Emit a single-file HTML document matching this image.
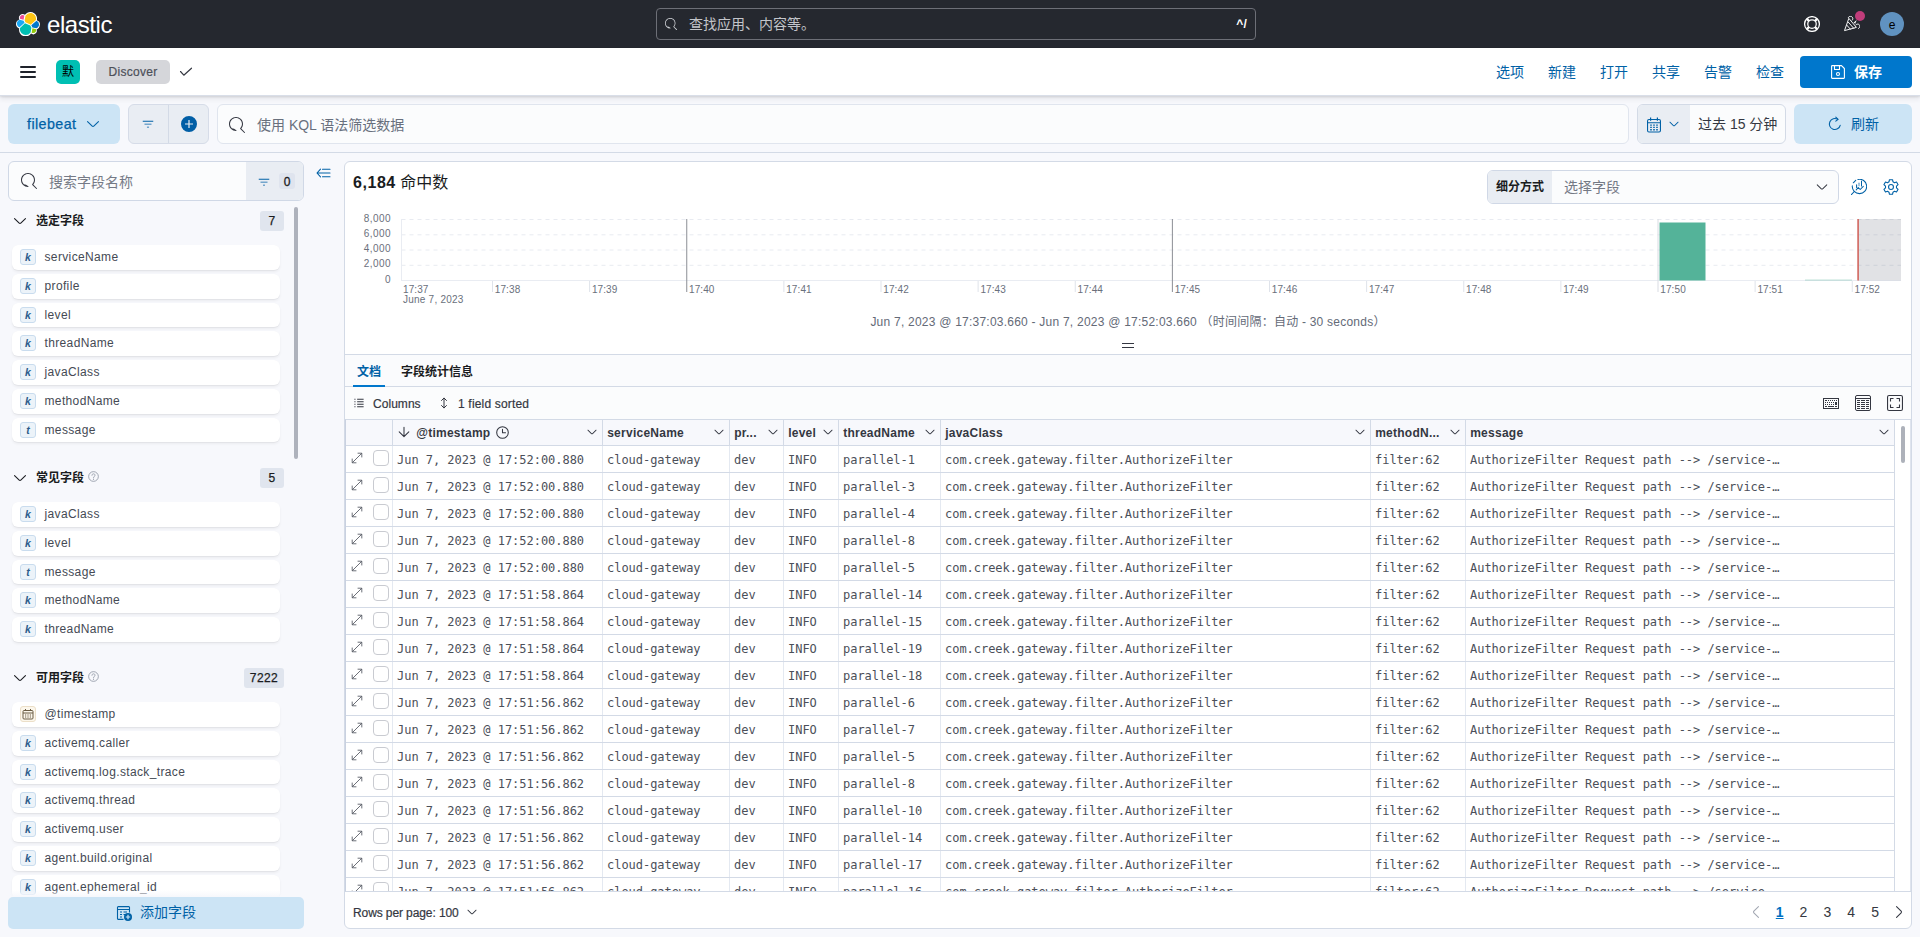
<!DOCTYPE html>
<html lang="zh-CN"><head><meta charset="utf-8"><title>Discover - Elastic</title>
<style>
*{box-sizing:border-box;margin:0;padding:0}
html,body{width:1920px;height:937px;overflow:hidden;background:#f7f8fc}
body{font-family:"Liberation Sans", "Noto Sans CJK SC", sans-serif;font-size:14px;color:#343741;position:relative;-webkit-font-smoothing:antialiased}
.abs{position:absolute}
svg{display:block}
.mono{font-family:"DejaVu Sans Mono", "Liberation Mono", monospace}
/* top dark header */
#h1{left:0;top:0;width:1920px;height:48px;background:#25282f}
#h2{left:0;top:48px;width:1920px;height:48px;background:#fff;box-shadow:0 1px 2px rgba(0,0,0,.10),0 3px 5px rgba(40,40,50,.09);border-bottom:1px solid #d9dee8}
#elastic{left:47px;top:8.5px;font-size:24px;line-height:32px;color:#fff;letter-spacing:-.42px;font-weight:400}
#gsearch{left:656px;top:8px;width:600px;height:32px;border:1px solid #6d6f77;border-radius:4px}
#gsearch .ph{left:32px;top:0;line-height:30px;font-size:14px;color:#c3c5ca}
#gsearch .kb{right:8px;top:0;line-height:30px;font-size:12px;font-weight:700;color:#fff;letter-spacing:.2px}
#avatar{left:1880px;top:12px;width:24px;height:24px;border-radius:12px;background:#6092c0;color:#000;font-size:12px;line-height:27px;text-align:center}
#dot{left:1855px;top:11px;width:10px;height:10px;border-radius:5px;background:#c13d7b}
#space{left:56px;top:60px;width:24px;height:24px;border-radius:5px;background:#00bfb3;color:#000;font-size:12px;line-height:24px;text-align:center}
#crumb{left:96px;top:60px;width:74px;height:24px;border-radius:5px;background:#d5d6da;color:#4c5059;font-size:12px;line-height:24px;text-align:center;letter-spacing:.3px;-webkit-text-stroke:.2px #4c5059}
.tlink{top:60px;height:24px;line-height:24px;font-size:14px;color:#0061a6;width:28px;white-space:nowrap}
#save{left:1800px;top:56px;width:112px;height:32px;border-radius:4px;background:#0077cc;color:#fff}
#save span{left:54px;top:0;line-height:32px;font-size:14px;font-weight:700}
/* query bar */
#dv{left:8px;top:104px;width:112px;height:40px;border-radius:6px;background:#cce4f5;color:#0061a6}
#dv span{left:19px;top:0;line-height:41px;font-size:14.3px;letter-spacing:.42px;-webkit-text-stroke:.25px #0061a6}
#fgrp{left:128px;top:104px;width:81px;height:40px;border-radius:6px;background:#e9edf3;border:1px solid #d6dce8}
#fgrp i{left:39px;top:0;width:1px;height:38px;background:#d3dae6}
#qin{left:217px;top:104px;width:1412px;height:40px;border-radius:6px;background:#fbfcfd;border:1px solid #e0e5ee}
#qin span{left:39px;top:0;line-height:40px;font-size:14px;color:#69707d}
#dp{left:1637px;top:104px;width:149px;height:40px;border-radius:6px;background:#fbfcfd;border:1px solid #d3dae6;overflow:hidden}
#dp .pre{left:0;top:0;width:52px;height:38px;background:#e9edf3}
#dp span{left:60px;top:0;line-height:38px;font-size:14px;color:#343741;white-space:nowrap}
#rf{left:1794px;top:104px;width:118px;height:40px;border-radius:6px;background:#cce4f5;color:#0061a6}
#rf span{left:57px;top:0;line-height:40px;font-size:14px}
#qline{left:0;top:152px;width:1920px;height:1px;background:#d3dae6}

#fs{left:8px;top:161px;width:296px;height:40px;border-radius:6px;background:#fbfcfd;border:1px solid #d0d8e6;overflow:hidden}
#fs .ph{left:40px;top:0;line-height:41px;font-size:14px;color:#757a86}
#fs .app{left:237px;top:0;width:58px;height:38px;background:#e9edf3}
#fs .n0{left:270px;top:11px;width:16px;height:16px;border-radius:3px;background:#dfe4ee;color:#1a1c21;font-size:12px;font-weight:400;-webkit-text-stroke:.3px #1a1c21;line-height:18px;text-align:center}
.sh{left:36px;font-size:12px;font-weight:700;color:#1a1c21;line-height:20px;height:20px;white-space:nowrap}
.sb{height:20px;border-radius:3px;background:#e0e5ee;color:#1a1c21;font-size:12px;font-weight:400;-webkit-text-stroke:.25px #1a1c21;line-height:20px;text-align:center;letter-spacing:.4px}
#flist{left:0;top:202px;width:310px;height:694px;overflow:hidden}
.fi{left:12px;width:268px;height:24.570px;border-radius:6px;background:#fff;box-shadow:0 .8px .8px rgba(0,0,0,.04),0 2px 3px rgba(0,0,0,.05)}
.fi span{left:32.500px;top:0;line-height:24px;font-size:12px;color:#454a54;letter-spacing:.36px;white-space:nowrap}
.tk{left:8px;top:4px;width:16px;height:16px;border-radius:3px;background:#ecf3f9;border:1px solid #c9dcee;color:#2b5c8a;font-size:10.500px;font-weight:700;font-style:italic;line-height:14px;text-align:center;font-family:"Liberation Sans",sans-serif}
.tk.d{background:#fcf7ec;border-color:#ecdfc8;color:#6a5c44}
#addf{left:8px;top:897px;width:296px;height:32px;border-radius:5px;background:#cce4f5;color:#0061a6}
#addf span{left:132px;top:0;line-height:31px;font-size:14px}
#sthumb{left:294px;top:207px;width:4px;height:252px;border-radius:2px;background:#aeb2bc}

#panel{left:344px;top:161px;width:1568px;height:768px;border:1px solid #d3dae6;border-radius:6px;background:#fff;overflow:hidden}
/* coordinates inside #panel are page coords minus (345,162) */
#hits{left:8px;top:10px;line-height:22px;font-size:16px;color:#1a1c21;white-space:nowrap}
#hits b{font-weight:700;letter-spacing:.55px}
#bd{left:1142px;top:8px;width:352px;height:34px;border-radius:6px;border:1px solid #d0d8e6;background:#fbfcfd;overflow:hidden}
#bd .pre{left:0;top:0;width:64px;height:32px;background:#e9edf3;font-size:12px;font-weight:700;color:#1a1c21;line-height:33px;padding-left:8px}
#bd .ph{left:76px;top:0;line-height:33px;font-size:14px;color:#747985}
.yl{left:0;width:46px;text-align:right;font-size:10px;line-height:12px;color:#6a707c;letter-spacing:.45px}
.xl{font-size:10px;line-height:12px;color:#6a707c;letter-spacing:.1px;white-space:nowrap}
#trange{left:0;top:151px;width:1566px;text-align:center;font-size:12px;line-height:18px;color:#646a77;letter-spacing:.23px;white-space:pre}
#tabs{left:0;top:192px;width:1566px;height:33px;background:#fafbfd;border-top:1px solid #d3dae6;border-bottom:1px solid #d3dae6}
#tabs div{top:0;line-height:34px;font-size:12px;font-weight:700;white-space:nowrap}
#tbar{left:0;top:225px;width:1566px;height:32px;background:#fbfcfd}
#tbar span{top:0;line-height:34px;font-size:12px;font-weight:400;-webkit-text-stroke:.2px #343741;color:#343741;letter-spacing:.04px;white-space:nowrap}
#grid{left:0;top:257px;width:1550px;height:473px;border:1px solid #d3dae6;border-left-color:#c9d1e0;overflow:hidden;background:#fff}
.hr{left:0;top:0;width:1548px;height:26px;background:#f7f8fc;border-bottom:1px solid #d3dae6}
.hc{top:0;height:25px;border-right:1px solid #d3dae6;line-height:26px;font-size:12px;font-weight:700;color:#343741;letter-spacing:.25px;white-space:nowrap;padding-left:4.200px}
.hc svg{position:absolute;right:4px;top:6px}
.row{left:0;width:1548px;height:27px;border-bottom:1px solid #d3dae6}
.c{top:0;height:26px;border-right:1px solid #e4e9f1;line-height:29.500px;font-size:12px;color:#4b4f59;white-space:pre;padding-left:4px;letter-spacing:-.03px;overflow:hidden}
.cb{left:27px;top:4px;width:16px;height:16px;border:1px solid #c9cbd1;border-radius:4px;background:#fff}
#foot span{line-height:20px;font-size:12px;font-weight:400;-webkit-text-stroke:.2px #343741;color:#343741;letter-spacing:-.1px;white-space:nowrap}
.pg{top:740px;width:24px;text-align:center;line-height:20px;font-size:14px;font-weight:500;color:#343741}
#gthumb{left:1556px;top:264px;width:4px;height:37px;border-radius:2px;background:#adb1ba}
</style></head>
<body>
<div id="h1" class="abs">
<svg width="24" height="24" viewBox="0 0 32 32" style="position:absolute;left:16px;top:12px"><g fill="none" fill-rule="evenodd"><path fill="#FFF" d="M32 16.77a6.334 6.334 0 0 0-1.14-3.63 6.269 6.269 0 0 0-3.02-2.3 9.098 9.098 0 0 0-.34-5.06 8.997 8.997 0 0 0-3.25-4.14A8.872 8.872 0 0 0 19.17 0a8.823 8.823 0 0 0-4.06.97 8.93 8.93 0 0 0-3.17 2.72 4.798 4.798 0 0 0-2.9-1 4.726 4.726 0 0 0-3.41 1.4A4.8 4.8 0 0 0 4.5 9.98a6.366 6.366 0 0 0-3.35 2.31A6.397 6.397 0 0 0 0 15.97a6.334 6.334 0 0 0 1.15 3.65 6.282 6.282 0 0 0 3.05 2.3 9.068 9.068 0 0 0-.17 1.74 8.886 8.886 0 0 0 1.7 5.26 8.759 8.759 0 0 0 4.45 3.24 8.711 8.711 0 0 0 5.49-.03 8.775 8.775 0 0 0 4.4-3.3 4.77 4.77 0 0 0 2.89 1.01 4.726 4.726 0 0 0 3.41-1.4 4.798 4.798 0 0 0 1.13-5.1 6.366 6.366 0 0 0 3.05-2.31 6.397 6.397 0 0 0 1.15-3.66"/><path fill="#FEC514" d="M12.58 13.787l7.002 3.211 7.066-6.213a7.849 7.849 0 0 0 .152-1.557c0-4.287-3.464-7.762-7.738-7.762a7.727 7.727 0 0 0-6.39 3.391l-1.176 6.128 1.084 2.802z"/><path fill="#00BFB3" d="M5.33 21.228a7.957 7.957 0 0 0-.151 1.584c0 4.297 3.484 7.781 7.783 7.781a7.767 7.767 0 0 0 6.422-3.4l1.166-6.08-1.556-2.976-7.03-3.204-6.634 6.295z"/><path fill="#F04E98" d="M5.288 9.067l4.8 1.137L11.14 4.73a3.785 3.785 0 0 0-2.29-.775 3.797 3.797 0 0 0-3.562 5.113"/><path fill="#1BA9F5" d="M4.872 10.214c-2.144.71-3.644 2.775-3.644 5.064 0 2.229 1.374 4.218 3.438 5.005l6.734-6.101-1.237-2.649-5.291-1.319z"/><path fill="#93C90E" d="M20.873 27.193c.659.509 1.466.787 2.291.787a3.794 3.794 0 0 0 3.551-5.113l-4.797-1.125-1.045 5.45z"/><path fill="#07C" d="M21.848 20.563l5.28 1.238c2.146-.71 3.646-2.776 3.646-5.066a5.376 5.376 0 0 0-3.446-5.003l-6.907 6.07 1.427 2.76z"/></g></svg>
<div id="elastic" class="abs">elastic</div>
<div id="gsearch" class="abs"><svg width="12" height="12" viewBox="0 0 16 16" fill="currentColor" style="position:absolute;left:8px;top:9px;color:#d0d2d7"><path d="m11.271 11.978 3.872 3.873a.502.502 0 0 0 .708 0 .502.502 0 0 0 0-.708l-3.565-3.564c2.38-2.747 2.267-6.923-.342-9.532-2.73-2.73-7.17-2.73-9.898 0-2.728 2.729-2.728 7.17 0 9.9a6.955 6.955 0 0 0 4.949 2.05.5.5 0 0 0 0-1 5.96 5.96 0 0 0-4.242-1.757 6.01 6.01 0 0 1 0-8.486c2.337-2.34 6.143-2.34 8.484 0a6.01 6.01 0 0 1 0 8.486.5.5 0 0 0 .034.738Z"/></svg><div class="ph abs">查找应用、内容等。</div><div class="kb abs">^/</div></div>
<svg width="16" height="16" viewBox="0 0 16 16" fill="currentColor" style="position:absolute;left:1804px;top:16px;color:#fff"><g fill="none" stroke="currentColor"><circle cx="8" cy="8" r="7.400" stroke-width="1.250"/><circle cx="8" cy="8" r="4.250" stroke-width="1.250"/><path d="M2.900 2.900l2.100 2.100M13.100 2.900 11 5M2.900 13.100 5 11M13.100 13.100 11 11" stroke-width="2.300"/></g></svg>
<svg width="16" height="16" viewBox="0 0 16 16" fill="currentColor" style="position:absolute;left:1844px;top:16px;color:#fff"><g fill="none" stroke="currentColor" stroke-width=".95" stroke-linejoin="round" stroke-linecap="round"><path d="M4.700 2.700.5 14.600 12 11.500z"/><path d="M4.300 6.200l5.500 6.200M2.900 9.300l3.600 4"/><path d="M4.300 1.500C4.800.3 6.500-.1 7.700.7c1.300.8 1.500 2.300.6 3.400"/><path d="M12 8.700c1-.8 2.500-.8 3.300.1.900 1 .6 2.700-.7 3.700"/></g><path d="M12.700 4 9.400 6.700l1.200.3.400 1.200z"/></svg>
<div id="dot" class="abs"></div><div id="avatar" class="abs">e</div>
</div>
<div id="h2" class="abs"></div>
<div class="abs" style="left:20px;top:66px;width:16px;height:2px;background:#1f232b;border-radius:1px"></div>
<div class="abs" style="left:20px;top:71px;width:16px;height:2px;background:#1f232b;border-radius:1px"></div>
<div class="abs" style="left:20px;top:76px;width:16px;height:2px;background:#1f232b;border-radius:1px"></div>
<div id="space" class="abs">默</div>
<div id="crumb" class="abs">Discover</div>
<svg class="abs" style="left:179px;top:66px" width="14" height="12" viewBox="0 0 14 12" fill="none" stroke="#343741" stroke-width="1.15" stroke-linecap="round" stroke-linejoin="round"><path d="M1.500 5.500 4.800 9.200 12.500 2.200"/></svg>
<div class="tlink abs" style="left:1496px">选项</div>
<div class="tlink abs" style="left:1548px">新建</div>
<div class="tlink abs" style="left:1600px">打开</div>
<div class="tlink abs" style="left:1652px">共享</div>
<div class="tlink abs" style="left:1704px">告警</div>
<div class="tlink abs" style="left:1756px">检查</div>
<div id="save" class="abs"><svg width="16" height="16" viewBox="0 0 16 16" fill="currentColor" style="position:absolute;left:30px;top:8px"><g fill="none" stroke="currentColor" stroke-width="1.1" stroke-linejoin="round"><path d="M1.6 2.200a.6.6 0 0 1 .6-.6h9.300l2.900 2.900v9.300a.6.6 0 0 1-.6.600H2.200a.6.6 0 0 1-.6-.6z"/><path d="M4.500 1.600v3.900h5V1.600"/><circle cx="8" cy="10" r="1.500"/></g></svg><span class="abs">保存</span></div>
<div id="dv" class="abs"><span class="abs">filebeat</span><svg width="16" height="16" viewBox="0 0 16 16" fill="currentColor" style="position:absolute;left:77px;top:12px"><path d="M13.069 5.157 8.384 9.768a.546.546 0 0 1-.768 0L2.93 5.158a.552.552 0 0 0-.771 0 .53.53 0 0 0 0 .759l4.684 4.61c.641.631 1.672.63 2.312 0l4.684-4.61a.53.53 0 0 0 0-.76.552.552 0 0 0-.771 0Z"/></svg></div>
<div id="fgrp" class="abs"><i class="abs"></i><svg width="14" height="14" viewBox="0 0 16 16" fill="currentColor" style="position:absolute;left:12px;top:12px;color:#0061a6"><path d="M2 4.2h12v1.1H2zM4 7.6h8v1.1H4zM6.8 11h2.4v1.1H6.8z"/></svg><svg width="16" height="16" viewBox="0 0 16 16" fill="currentColor" style="position:absolute;left:51.5px;top:10.7px;color:#005ea6"><path d="M8 16A8 8 0 1 1 8 0a8 8 0 0 1 0 16Zm.6-8.6V4H7.4v3.4H4v1.2h3.4V12h1.2V8.6H12V7.4H8.6Z"/></svg></div>
<div id="qin" class="abs"><svg width="16" height="16" viewBox="0 0 16 16" fill="currentColor" style="position:absolute;left:11px;top:12px;color:#343741"><path d="m11.271 11.978 3.872 3.873a.502.502 0 0 0 .708 0 .502.502 0 0 0 0-.708l-3.565-3.564c2.38-2.747 2.267-6.923-.342-9.532-2.73-2.73-7.17-2.73-9.898 0-2.728 2.729-2.728 7.17 0 9.9a6.955 6.955 0 0 0 4.949 2.05.5.5 0 0 0 0-1 5.96 5.96 0 0 0-4.242-1.757 6.01 6.01 0 0 1 0-8.486c2.337-2.34 6.143-2.34 8.484 0a6.01 6.01 0 0 1 0 8.486.5.5 0 0 0 .034.738Z"/></svg><span class="abs">使用 KQL 语法筛选数据</span></div>
<div id="dp" class="abs"><div class="pre abs"></div><svg width="16" height="16" viewBox="0 0 16 16" fill="currentColor" style="position:absolute;left:8px;top:12px;color:#0061a6"><g fill="none" stroke="currentColor" stroke-width="1.1"><rect x="1.550" y="2.550" width="12.900" height="12.400" rx="1.400"/><path d="M1.600 5.800h12.800"/></g><path d="M4 .5h1.200v3.300H4zM10.800 .5H12v3.300h-1.200zM4.200 7.500h1.600v1.300H4.200zM7.200 7.500h1.600v1.300H7.200zM10.200 7.500h1.600v1.300h-1.600zM4.200 9.800h1.600v1.300H4.200zM7.200 9.800h1.600v1.300H7.200zM10.200 9.800h1.600v1.300h-1.600zM4.200 12.100h1.600v1.300H4.200zM7.200 12.100h1.600v1.300H7.200zM10.200 12.100h1.600v1.300h-1.600z"/></svg><svg width="12" height="12" viewBox="0 0 16 16" fill="currentColor" style="position:absolute;left:30px;top:13px;color:#0061a6"><path d="M13.069 5.157 8.384 9.768a.546.546 0 0 1-.768 0L2.93 5.158a.552.552 0 0 0-.771 0 .53.53 0 0 0 0 .759l4.684 4.61c.641.631 1.672.63 2.312 0l4.684-4.61a.53.53 0 0 0 0-.76.552.552 0 0 0-.771 0Z"/></svg><span class="abs">过去 15 分钟</span></div>
<div id="rf" class="abs"><svg width="16" height="16" viewBox="0 0 16 16" fill="currentColor" style="position:absolute;left:33px;top:12px"><g fill="none" stroke="currentColor" stroke-width="1.1" stroke-linecap="round" stroke-linejoin="round"><path d="M13.200 9.300A5.500 5.500 0 1 1 10.700 3.300"/><path d="M8.800 1.200l2.300 2.100-2.300 1.900" /></g></svg><span class="abs">刷新</span></div>
<div id="qline" class="abs"></div>
<div id="fs" class="abs"><svg width="16" height="16" viewBox="0 0 16 16" fill="currentColor" style="position:absolute;left:12px;top:11px;color:#343741"><path d="m11.271 11.978 3.872 3.873a.502.502 0 0 0 .708 0 .502.502 0 0 0 0-.708l-3.565-3.564c2.38-2.747 2.267-6.923-.342-9.532-2.73-2.73-7.17-2.73-9.898 0-2.728 2.729-2.728 7.17 0 9.9a6.955 6.955 0 0 0 4.949 2.05.5.5 0 0 0 0-1 5.96 5.96 0 0 0-4.242-1.757 6.01 6.01 0 0 1 0-8.486c2.337-2.34 6.143-2.34 8.484 0a6.01 6.01 0 0 1 0 8.486.5.5 0 0 0 .034.738Z"/></svg><div class="ph abs">搜索字段名称</div><div class="app abs"></div><svg width="14" height="14" viewBox="0 0 16 16" fill="currentColor" style="position:absolute;left:248px;top:13px;color:#0061a6"><path d="M2 4.2h12v1.1H2zM4 7.6h8v1.1H4zM6.8 11h2.4v1.1H6.8z"/></svg><div class="n0 abs">0</div></div>
<svg width="15" height="10" viewBox="0 0 15 10" fill="currentColor" style="position:absolute;left:316.300px;top:167.500px;color:#0061a6"><g fill="none" stroke="currentColor" stroke-width="1.1" stroke-linecap="round" stroke-linejoin="round"><path d="M4.500 1.200 1 5l3.500 3.800M1.300 5H14M6.500 1.200H14M6.500 8.800H14"/></g></svg>
<div id="flist" class="abs">
<svg width="16" height="16" viewBox="0 0 16 16" fill="currentColor" style="position:absolute;left:12px;top:11px;color:#1a1c21"><path d="M13.069 5.157 8.384 9.768a.546.546 0 0 1-.768 0L2.93 5.158a.552.552 0 0 0-.771 0 .53.53 0 0 0 0 .759l4.684 4.61c.641.631 1.672.63 2.312 0l4.684-4.61a.53.53 0 0 0 0-.76.552.552 0 0 0-.771 0Z"/></svg><div class="sh abs" style="top:9px">选定字段</div><div class="sb abs" style="left:260px;width:24px;top:9px">7</div><div class="fi abs" style="top:43.20px"><div class="tk abs">k</div><span class="abs">serviceName</span></div><div class="fi abs" style="top:71.95px"><div class="tk abs">k</div><span class="abs">profile</span></div><div class="fi abs" style="top:100.70px"><div class="tk abs">k</div><span class="abs">level</span></div><div class="fi abs" style="top:129.45px"><div class="tk abs">k</div><span class="abs">threadName</span></div><div class="fi abs" style="top:158.20px"><div class="tk abs">k</div><span class="abs">javaClass</span></div><div class="fi abs" style="top:186.95px"><div class="tk abs">k</div><span class="abs">methodName</span></div><div class="fi abs" style="top:215.70px"><div class="tk abs">t</div><span class="abs">message</span></div>
<svg width="16" height="16" viewBox="0 0 16 16" fill="currentColor" style="position:absolute;left:12px;top:268px;color:#1a1c21"><path d="M13.069 5.157 8.384 9.768a.546.546 0 0 1-.768 0L2.93 5.158a.552.552 0 0 0-.771 0 .53.53 0 0 0 0 .759l4.684 4.61c.641.631 1.672.63 2.312 0l4.684-4.61a.53.53 0 0 0 0-.76.552.552 0 0 0-.771 0Z"/></svg><div class="sh abs" style="top:266px">常见字段</div><svg width="11" height="11" viewBox="0 0 12 12" fill="currentColor" style="position:absolute;left:88px;top:269px;color:#8e95a3"><g fill="none" stroke="currentColor" stroke-width=".9"><circle cx="6" cy="6" r="5.300"/><path d="M4.300 4.700c0-1 .8-1.600 1.700-1.600s1.700.6 1.700 1.500c0 1.200-1.700 1.300-1.700 2.600" stroke-linecap="round"/></g><circle cx="6" cy="8.900" r=".6"/></svg><div class="sb abs" style="left:260px;width:24px;top:266px">5</div><div class="fi abs" style="top:300.20px"><div class="tk abs">k</div><span class="abs">javaClass</span></div><div class="fi abs" style="top:328.95px"><div class="tk abs">k</div><span class="abs">level</span></div><div class="fi abs" style="top:357.70px"><div class="tk abs">t</div><span class="abs">message</span></div><div class="fi abs" style="top:386.45px"><div class="tk abs">k</div><span class="abs">methodName</span></div><div class="fi abs" style="top:415.20px"><div class="tk abs">k</div><span class="abs">threadName</span></div>
<svg width="16" height="16" viewBox="0 0 16 16" fill="currentColor" style="position:absolute;left:12px;top:468px;color:#1a1c21"><path d="M13.069 5.157 8.384 9.768a.546.546 0 0 1-.768 0L2.93 5.158a.552.552 0 0 0-.771 0 .53.53 0 0 0 0 .759l4.684 4.61c.641.631 1.672.63 2.312 0l4.684-4.61a.53.53 0 0 0 0-.76.552.552 0 0 0-.771 0Z"/></svg><div class="sh abs" style="top:466px">可用字段</div><svg width="11" height="11" viewBox="0 0 12 12" fill="currentColor" style="position:absolute;left:88px;top:469px;color:#8e95a3"><g fill="none" stroke="currentColor" stroke-width=".9"><circle cx="6" cy="6" r="5.300"/><path d="M4.300 4.700c0-1 .8-1.600 1.700-1.600s1.700.6 1.700 1.500c0 1.200-1.700 1.300-1.700 2.600" stroke-linecap="round"/></g><circle cx="6" cy="8.900" r=".6"/></svg><div class="sb abs" style="left:244px;width:40px;top:466px">7222</div><div class="fi abs" style="top:500.20px"><div class="tk d abs"><svg width="12" height="12" viewBox="0 0 12 12" fill="currentColor" style="position:absolute;left:1px;top:1px"><g fill="none" stroke="currentColor" stroke-width="1"><rect x="1" y="2.500" width="10" height="8.500" rx="1"/><path d="M1 5h10M3.500 1v2M8.500 1v2"/></g><path d="M3 6.500h1.200v1H3zM5.400 6.500h1.200v1H5.400zM7.800 6.500H9v1H7.800zM3 8.500h1.200v1H3zM5.400 8.500h1.200v1H5.400zM7.800 8.500H9v1H7.800z"/></svg></div><span class="abs">@timestamp</span></div><div class="fi abs" style="top:528.95px"><div class="tk abs">k</div><span class="abs">activemq.caller</span></div><div class="fi abs" style="top:557.70px"><div class="tk abs">k</div><span class="abs">activemq.log.stack_trace</span></div><div class="fi abs" style="top:586.45px"><div class="tk abs">k</div><span class="abs">activemq.thread</span></div><div class="fi abs" style="top:615.20px"><div class="tk abs">k</div><span class="abs">activemq.user</span></div><div class="fi abs" style="top:643.95px"><div class="tk abs">k</div><span class="abs">agent.build.original</span></div><div class="fi abs" style="top:672.70px"><div class="tk abs">k</div><span class="abs">agent.ephemeral_id</span></div>
<div class="abs" style="left:0;top:688px;width:310px;height:6px;background:linear-gradient(rgba(247,248,252,0),rgba(247,248,252,.9))"></div>
</div>
<div id="sthumb" class="abs"></div>
<div id="addf" class="abs"><svg width="16" height="16" viewBox="0 0 16 16" fill="currentColor" style="position:absolute;left:108px;top:8px"><g fill="none" stroke="currentColor" stroke-width="1.1" stroke-linejoin="round"><path d="M7.500 14.400H2.200a.7.700 0 0 1-.7-.7V2.300a.7.700 0 0 1 .7-.7h10.600a.7.700 0 0 1 .7.700v5.200"/><path d="M1.500 4.500h12M4 7h2M7.500 7H11M4 9.500h2M7.500 9.500h1.500M4 12h2"/></g><circle cx="12" cy="12" r="4"/><path d="M12 9.800v4.400M9.800 12h4.400" stroke="#cce4f5" stroke-width="1.200"/></svg><span class="abs">添加字段</span></div>
<div id="panel" class="abs">
<div id="hits" class="abs"><b>6,184</b> 命中数</div>
<div id="bd" class="abs"><div class="pre abs">细分方式</div><div class="ph abs">选择字段</div><svg width="14" height="14" viewBox="0 0 16 16" fill="currentColor" style="position:absolute;left:327px;top:9px;color:#343741"><path d="M13.069 5.157 8.384 9.768a.546.546 0 0 1-.768 0L2.93 5.158a.552.552 0 0 0-.771 0 .53.53 0 0 0 0 .759l4.684 4.61c.641.631 1.672.63 2.312 0l4.684-4.61a.53.53 0 0 0 0-.76.552.552 0 0 0-.771 0Z"/></svg></div>
<svg width="16" height="16" viewBox="0 0 16 16" fill="currentColor" style="position:absolute;left:1506px;top:17px;color:#0061a6"><g fill="none" stroke="currentColor" stroke-width="1.050" stroke-linecap="round" stroke-linejoin="round"><path d="M6.900 .4A7.200 7.200 0 1 1 1.300 6.800"/><path d="M2.300 3.800 4.700 1.400M3.300 12.500.3 15.700"/><path d="M5.600 5.700v2.800M10.500 2v5"/><path d="M8 4.200v2.500" opacity=".55" stroke-width="1.300"/><path d="M5.200 10.900l2-2.400 2 2 3.100-3.100"/></g></svg>
<svg width="16" height="16" viewBox="0 0 16 16" fill="currentColor" style="position:absolute;left:1538px;top:17px;color:#0061a6"><g fill="none" stroke="currentColor" stroke-width="1.100" stroke-linejoin="round"><path d="M6.01 2.82L6.45 0.71L9.55 0.71L9.99 2.82L11.49 3.69L13.54 3.01L15.09 5.70L13.48 7.13L13.48 8.87L15.09 10.30L13.54 12.99L11.49 12.31L9.99 13.18L9.55 15.29L6.45 15.29L6.01 13.18L4.51 12.31L2.46 12.99L0.91 10.30L2.52 8.87L2.52 7.13L0.91 5.70L2.46 3.01L4.51 3.69Z"/><circle cx="8" cy="8" r="2.450"/></g></svg>
<svg class="abs" style="left:0;top:50px" width="1566" height="140" viewBox="0 0 1566 140"><path d="M56.5 7.5H1556" stroke="#e8ebf1" stroke-width="1" stroke-dasharray="4 4"/><path d="M56.5 22.80000000000001H1556" stroke="#e8ebf1" stroke-width="1" stroke-dasharray="4 4"/><path d="M56.5 38.0H1556" stroke="#e8ebf1" stroke-width="1" stroke-dasharray="4 4"/><path d="M56.5 53.30000000000001H1556" stroke="#e8ebf1" stroke-width="1" stroke-dasharray="4 4"/><path d="M56.5 7V69" stroke="#e9ecf2" stroke-width="1"/><path d="M56 68.5H1556" stroke="#e9ecf2" stroke-width="1"/><path d="M147.50 69V80" stroke="#dfe3ea" stroke-width="1"/><path d="M244.62 69V80" stroke="#dfe3ea" stroke-width="1"/><path d="M341.75 7V80" stroke="#8b8e95" stroke-width="1"/><path d="M438.88 69V80" stroke="#dfe3ea" stroke-width="1"/><path d="M536.00 69V80" stroke="#dfe3ea" stroke-width="1"/><path d="M633.12 69V80" stroke="#dfe3ea" stroke-width="1"/><path d="M730.25 69V80" stroke="#dfe3ea" stroke-width="1"/><path d="M827.38 7V80" stroke="#8b8e95" stroke-width="1"/><path d="M924.50 69V80" stroke="#dfe3ea" stroke-width="1"/><path d="M1021.62 69V80" stroke="#dfe3ea" stroke-width="1"/><path d="M1118.75 69V80" stroke="#dfe3ea" stroke-width="1"/><path d="M1215.88 69V80" stroke="#dfe3ea" stroke-width="1"/><path d="M1313.00 7V80" stroke="#d9dce3" stroke-width="1"/><path d="M1410.12 69V80" stroke="#dfe3ea" stroke-width="1"/><path d="M1507.25 69V80" stroke="#dfe3ea" stroke-width="1"/><rect x="1314.5" y="10.5" width="46" height="58.0" fill="#54b399"/><rect x="1460" y="67.60000000000002" width="47" height=".9" fill="#54b399" opacity=".45"/><rect x="1513" y="7" width="43" height="61.5" fill="#69707d" opacity=".2"/><rect x="1512.3" y="7" width="1.600" height="61.5" fill="#d2665f"/></svg>
<div class="yl abs" style="top:50.8px">8,000</div>
<div class="yl abs" style="top:66.0px">6,000</div>
<div class="yl abs" style="top:81.2px">4,000</div>
<div class="yl abs" style="top:96.3px">2,000</div>
<div class="yl abs" style="top:111.5px">0</div>
<div class="xl abs" style="left:58px;top:122px">17:37</div>
<div class="xl abs" style="left:58px;top:132px;letter-spacing:.23px">June 7, 2023</div>
<div class="xl abs" style="left:149.8px;top:122px">17:38</div>
<div class="xl abs" style="left:246.9px;top:122px">17:39</div>
<div class="xl abs" style="left:344.0px;top:122px">17:40</div>
<div class="xl abs" style="left:441.2px;top:122px">17:41</div>
<div class="xl abs" style="left:538.3px;top:122px">17:42</div>
<div class="xl abs" style="left:635.4px;top:122px">17:43</div>
<div class="xl abs" style="left:732.5px;top:122px">17:44</div>
<div class="xl abs" style="left:829.7px;top:122px">17:45</div>
<div class="xl abs" style="left:926.8px;top:122px">17:46</div>
<div class="xl abs" style="left:1023.9px;top:122px">17:47</div>
<div class="xl abs" style="left:1121.0px;top:122px">17:48</div>
<div class="xl abs" style="left:1218.2px;top:122px">17:49</div>
<div class="xl abs" style="left:1315.3px;top:122px">17:50</div>
<div class="xl abs" style="left:1412.4px;top:122px">17:51</div>
<div class="xl abs" style="left:1509.5px;top:122px">17:52</div>
<div id="trange" class="abs">Jun 7, 2023 @ 17:37:03.660 - Jun 7, 2023 @ 17:52:03.660 （时间间隔：自动 - 30 seconds）</div>
<div class="abs" style="left:777px;top:181px;width:12px;height:1px;background:#343741"></div><div class="abs" style="left:777px;top:185px;width:12px;height:1px;background:#343741"></div>
<div id="tabs" class="abs"><div class="abs" style="left:12px;color:#0061a6">文档</div><div class="abs" style="left:56px;color:#1a1c21">字段统计信息</div><i class="abs" style="left:8px;top:29.700px;width:32px;height:2.300px;background:#0077cc"></i></div>
<div id="tbar" class="abs"><svg width="12" height="12" viewBox="0 0 12 13" fill="currentColor" style="position:absolute;left:8px;top:10px;color:#343741"><path d="M1 2h1.200v1.100H1zM4 2h7v1.100H4zM1 4.700h1.200v1.100H1zM4 4.700h7v1.100H4zM1 7.400h1.200v1.100H1zM4 7.400h7v1.100H4zM1 10.100h1.200v1.100H1zM4 10.100h7v1.100H4z"/></svg><span class="abs" style="left:28px">Columns</span><svg width="8" height="12" viewBox="0 0 8 12" fill="currentColor" style="position:absolute;left:95px;top:10px;color:#343741"><g fill="none" stroke="currentColor" stroke-width="1" stroke-linecap="round" stroke-linejoin="round"><path d="M4 1.200v9.600M1.500 3.500 4 1l2.500 2.500M1.500 8.500 4 11l2.500-2.500"/></g></svg><span class="abs" style="left:113px;letter-spacing:.18px">1 field sorted</span><svg width="16" height="16" viewBox="0 0 16 16" fill="currentColor" style="position:absolute;left:1478px;top:8px;color:#343741"><g fill="none" stroke="currentColor" stroke-width="1"><rect x=".5" y="3.500" width="15" height="10"/></g><path d="M2 5h2v1H2zM5 5h1v1H5zM7 5h1v1H7zM9 5h1v1H9zM11 5h1v1h-1zM13 5h1v1h-1zM2 7h1v1H2zM4 7h1v1H4zM6 7h1v1H6zM8 7h1v1H8zM10 7h1v1h-1zM12 7h2v3h-2zM2 9h1v1H2zM4 9h1v1H4zM6 9h1v1H6zM8 9h1v1H8zM10 9h1v1h-1zM2 11h2v1H2zM5 11h6v1H5zM12 11h2v1h-2z"/></svg><svg width="16" height="16" viewBox="0 0 16 16" fill="currentColor" style="position:absolute;left:1510px;top:8px;color:#343741"><g fill="none" stroke="currentColor" stroke-width="1"><rect x=".5" y=".5" width="15" height="15" rx="1.500"/></g><path d="M.5 3h15v1H.5zM2 5h3v1H2zM6 5h4v1H6zM11 5h3v1H11zM2 7h3v1H2zM6 7h4v1H6zM11 7h3v1H11zM2 9h3v1H2zM6 9h4v1H6zM11 9h3v1H11zM2 11h3v1H2zM6 11h4v1H6zM11 11h3v1H11zM2 13h3v1H2zM6 13h4v1H6zM11 13h3v1H11z"/></svg><svg width="16" height="16" viewBox="0 0 16 16" fill="currentColor" style="position:absolute;left:1542px;top:8px;color:#343741"><g fill="none" stroke="currentColor" stroke-width="1.1" stroke-linejoin="round"><rect x=".55" y=".55" width="14.900" height="14.900" rx="1.500"/><path d="M3.500 6.500v-3h3M9.500 3.500h3v3M12.500 9.500v3h-3M6.500 12.500h-3v-3"/></g></svg></div>
<div id="grid" class="abs"><div class="hr abs"><div class="hc abs" style="left:0;width:47px"></div><div class="hc abs" style="left:47px;width:210px"><svg width="12" height="12" viewBox="0 0 12 12" fill="currentColor" style="position:absolute;left:5.400px;top:6px;right:auto;color:#343741"><g fill="none" stroke="currentColor" stroke-width="1.050" stroke-linecap="round" stroke-linejoin="round"><path d="M6 1.200v9.300M1.200 5.800 6 10.600l4.800-4.800"/></g></svg><span style="padding-left:19px">@timestamp</span><svg width="13" height="13" viewBox="0 0 13 13" fill="currentColor" style="position:absolute;left:103px;top:6px;right:auto;color:#343741"><g fill="none" stroke="currentColor" stroke-width="1.050" stroke-linecap="round"><circle cx="6.500" cy="6.500" r="5.800"/><path d="M6.500 3.200v3.500h3"/></g></svg><svg width="12" height="12" viewBox="0 0 16 16" fill="currentColor" style="color:#343741"><path d="M13.069 5.157 8.384 9.768a.546.546 0 0 1-.768 0L2.93 5.158a.552.552 0 0 0-.771 0 .53.53 0 0 0 0 .759l4.684 4.61c.641.631 1.672.63 2.312 0l4.684-4.61a.53.53 0 0 0 0-.76.552.552 0 0 0-.771 0Z"/></svg></div><div class="hc abs" style="left:257px;width:127px">serviceName<svg width="12" height="12" viewBox="0 0 16 16" fill="currentColor" style="color:#343741"><path d="M13.069 5.157 8.384 9.768a.546.546 0 0 1-.768 0L2.93 5.158a.552.552 0 0 0-.771 0 .53.53 0 0 0 0 .759l4.684 4.61c.641.631 1.672.63 2.312 0l4.684-4.61a.53.53 0 0 0 0-.76.552.552 0 0 0-.771 0Z"/></svg></div><div class="hc abs" style="left:384px;width:54px">pr...<svg width="12" height="12" viewBox="0 0 16 16" fill="currentColor" style="color:#343741"><path d="M13.069 5.157 8.384 9.768a.546.546 0 0 1-.768 0L2.93 5.158a.552.552 0 0 0-.771 0 .53.53 0 0 0 0 .759l4.684 4.61c.641.631 1.672.63 2.312 0l4.684-4.61a.53.53 0 0 0 0-.76.552.552 0 0 0-.771 0Z"/></svg></div><div class="hc abs" style="left:438px;width:55px">level<svg width="12" height="12" viewBox="0 0 16 16" fill="currentColor" style="color:#343741"><path d="M13.069 5.157 8.384 9.768a.546.546 0 0 1-.768 0L2.93 5.158a.552.552 0 0 0-.771 0 .53.53 0 0 0 0 .759l4.684 4.61c.641.631 1.672.63 2.312 0l4.684-4.61a.53.53 0 0 0 0-.76.552.552 0 0 0-.771 0Z"/></svg></div><div class="hc abs" style="left:493px;width:102px">threadName<svg width="12" height="12" viewBox="0 0 16 16" fill="currentColor" style="color:#343741"><path d="M13.069 5.157 8.384 9.768a.546.546 0 0 1-.768 0L2.93 5.158a.552.552 0 0 0-.771 0 .53.53 0 0 0 0 .759l4.684 4.61c.641.631 1.672.63 2.312 0l4.684-4.61a.53.53 0 0 0 0-.76.552.552 0 0 0-.771 0Z"/></svg></div><div class="hc abs" style="left:595px;width:430px">javaClass<svg width="12" height="12" viewBox="0 0 16 16" fill="currentColor" style="color:#343741"><path d="M13.069 5.157 8.384 9.768a.546.546 0 0 1-.768 0L2.93 5.158a.552.552 0 0 0-.771 0 .53.53 0 0 0 0 .759l4.684 4.61c.641.631 1.672.63 2.312 0l4.684-4.61a.53.53 0 0 0 0-.76.552.552 0 0 0-.771 0Z"/></svg></div><div class="hc abs" style="left:1025px;width:95px">methodN...<svg width="12" height="12" viewBox="0 0 16 16" fill="currentColor" style="color:#343741"><path d="M13.069 5.157 8.384 9.768a.546.546 0 0 1-.768 0L2.93 5.158a.552.552 0 0 0-.771 0 .53.53 0 0 0 0 .759l4.684 4.61c.641.631 1.672.63 2.312 0l4.684-4.61a.53.53 0 0 0 0-.76.552.552 0 0 0-.771 0Z"/></svg></div><div class="hc abs" style="left:1120px;width:429px">message<svg width="12" height="12" viewBox="0 0 16 16" fill="currentColor" style="color:#343741"><path d="M13.069 5.157 8.384 9.768a.546.546 0 0 1-.768 0L2.93 5.158a.552.552 0 0 0-.771 0 .53.53 0 0 0 0 .759l4.684 4.61c.641.631 1.672.63 2.312 0l4.684-4.61a.53.53 0 0 0 0-.76.552.552 0 0 0-.771 0Z"/></svg></div></div><div class="row abs" style="top:26px"><div class="c abs" style="left:0;width:47px"><svg width="12" height="12" viewBox="0 0 12 12" fill="currentColor" style="position:absolute;left:5px;top:5.500px;color:#50555f"><g fill="none" stroke="currentColor" stroke-width=".85" stroke-linecap="round" stroke-linejoin="round"><path d="M1.500 10.500l9-9M7 1.200h3.800V5M1.200 7v3.800H5"/></g></svg><i class="cb abs"></i></div><div class="c mono abs" style="left:47px;width:210px">Jun 7, 2023 @ 17:52:00.880</div><div class="c mono abs" style="left:257px;width:127px">cloud-gateway</div><div class="c mono abs" style="left:384px;width:54px">dev</div><div class="c mono abs" style="left:438px;width:55px">INFO</div><div class="c mono abs" style="left:493px;width:102px">parallel-1</div><div class="c mono abs" style="left:595px;width:430px">com.creek.gateway.filter.AuthorizeFilter</div><div class="c mono abs" style="left:1025px;width:95px">filter:62</div><div class="c mono abs" style="left:1120px;width:429px">AuthorizeFilter Request path --&gt; /service-…</div></div><div class="row abs" style="top:53px"><div class="c abs" style="left:0;width:47px"><svg width="12" height="12" viewBox="0 0 12 12" fill="currentColor" style="position:absolute;left:5px;top:5.500px;color:#50555f"><g fill="none" stroke="currentColor" stroke-width=".85" stroke-linecap="round" stroke-linejoin="round"><path d="M1.500 10.500l9-9M7 1.200h3.800V5M1.200 7v3.800H5"/></g></svg><i class="cb abs"></i></div><div class="c mono abs" style="left:47px;width:210px">Jun 7, 2023 @ 17:52:00.880</div><div class="c mono abs" style="left:257px;width:127px">cloud-gateway</div><div class="c mono abs" style="left:384px;width:54px">dev</div><div class="c mono abs" style="left:438px;width:55px">INFO</div><div class="c mono abs" style="left:493px;width:102px">parallel-3</div><div class="c mono abs" style="left:595px;width:430px">com.creek.gateway.filter.AuthorizeFilter</div><div class="c mono abs" style="left:1025px;width:95px">filter:62</div><div class="c mono abs" style="left:1120px;width:429px">AuthorizeFilter Request path --&gt; /service-…</div></div><div class="row abs" style="top:80px"><div class="c abs" style="left:0;width:47px"><svg width="12" height="12" viewBox="0 0 12 12" fill="currentColor" style="position:absolute;left:5px;top:5.500px;color:#50555f"><g fill="none" stroke="currentColor" stroke-width=".85" stroke-linecap="round" stroke-linejoin="round"><path d="M1.500 10.500l9-9M7 1.200h3.800V5M1.200 7v3.800H5"/></g></svg><i class="cb abs"></i></div><div class="c mono abs" style="left:47px;width:210px">Jun 7, 2023 @ 17:52:00.880</div><div class="c mono abs" style="left:257px;width:127px">cloud-gateway</div><div class="c mono abs" style="left:384px;width:54px">dev</div><div class="c mono abs" style="left:438px;width:55px">INFO</div><div class="c mono abs" style="left:493px;width:102px">parallel-4</div><div class="c mono abs" style="left:595px;width:430px">com.creek.gateway.filter.AuthorizeFilter</div><div class="c mono abs" style="left:1025px;width:95px">filter:62</div><div class="c mono abs" style="left:1120px;width:429px">AuthorizeFilter Request path --&gt; /service-…</div></div><div class="row abs" style="top:107px"><div class="c abs" style="left:0;width:47px"><svg width="12" height="12" viewBox="0 0 12 12" fill="currentColor" style="position:absolute;left:5px;top:5.500px;color:#50555f"><g fill="none" stroke="currentColor" stroke-width=".85" stroke-linecap="round" stroke-linejoin="round"><path d="M1.500 10.500l9-9M7 1.200h3.800V5M1.200 7v3.800H5"/></g></svg><i class="cb abs"></i></div><div class="c mono abs" style="left:47px;width:210px">Jun 7, 2023 @ 17:52:00.880</div><div class="c mono abs" style="left:257px;width:127px">cloud-gateway</div><div class="c mono abs" style="left:384px;width:54px">dev</div><div class="c mono abs" style="left:438px;width:55px">INFO</div><div class="c mono abs" style="left:493px;width:102px">parallel-8</div><div class="c mono abs" style="left:595px;width:430px">com.creek.gateway.filter.AuthorizeFilter</div><div class="c mono abs" style="left:1025px;width:95px">filter:62</div><div class="c mono abs" style="left:1120px;width:429px">AuthorizeFilter Request path --&gt; /service-…</div></div><div class="row abs" style="top:134px"><div class="c abs" style="left:0;width:47px"><svg width="12" height="12" viewBox="0 0 12 12" fill="currentColor" style="position:absolute;left:5px;top:5.500px;color:#50555f"><g fill="none" stroke="currentColor" stroke-width=".85" stroke-linecap="round" stroke-linejoin="round"><path d="M1.500 10.500l9-9M7 1.200h3.800V5M1.200 7v3.800H5"/></g></svg><i class="cb abs"></i></div><div class="c mono abs" style="left:47px;width:210px">Jun 7, 2023 @ 17:52:00.880</div><div class="c mono abs" style="left:257px;width:127px">cloud-gateway</div><div class="c mono abs" style="left:384px;width:54px">dev</div><div class="c mono abs" style="left:438px;width:55px">INFO</div><div class="c mono abs" style="left:493px;width:102px">parallel-5</div><div class="c mono abs" style="left:595px;width:430px">com.creek.gateway.filter.AuthorizeFilter</div><div class="c mono abs" style="left:1025px;width:95px">filter:62</div><div class="c mono abs" style="left:1120px;width:429px">AuthorizeFilter Request path --&gt; /service-…</div></div><div class="row abs" style="top:161px"><div class="c abs" style="left:0;width:47px"><svg width="12" height="12" viewBox="0 0 12 12" fill="currentColor" style="position:absolute;left:5px;top:5.500px;color:#50555f"><g fill="none" stroke="currentColor" stroke-width=".85" stroke-linecap="round" stroke-linejoin="round"><path d="M1.500 10.500l9-9M7 1.200h3.800V5M1.200 7v3.800H5"/></g></svg><i class="cb abs"></i></div><div class="c mono abs" style="left:47px;width:210px">Jun 7, 2023 @ 17:51:58.864</div><div class="c mono abs" style="left:257px;width:127px">cloud-gateway</div><div class="c mono abs" style="left:384px;width:54px">dev</div><div class="c mono abs" style="left:438px;width:55px">INFO</div><div class="c mono abs" style="left:493px;width:102px">parallel-14</div><div class="c mono abs" style="left:595px;width:430px">com.creek.gateway.filter.AuthorizeFilter</div><div class="c mono abs" style="left:1025px;width:95px">filter:62</div><div class="c mono abs" style="left:1120px;width:429px">AuthorizeFilter Request path --&gt; /service-…</div></div><div class="row abs" style="top:188px"><div class="c abs" style="left:0;width:47px"><svg width="12" height="12" viewBox="0 0 12 12" fill="currentColor" style="position:absolute;left:5px;top:5.500px;color:#50555f"><g fill="none" stroke="currentColor" stroke-width=".85" stroke-linecap="round" stroke-linejoin="round"><path d="M1.500 10.500l9-9M7 1.200h3.800V5M1.200 7v3.800H5"/></g></svg><i class="cb abs"></i></div><div class="c mono abs" style="left:47px;width:210px">Jun 7, 2023 @ 17:51:58.864</div><div class="c mono abs" style="left:257px;width:127px">cloud-gateway</div><div class="c mono abs" style="left:384px;width:54px">dev</div><div class="c mono abs" style="left:438px;width:55px">INFO</div><div class="c mono abs" style="left:493px;width:102px">parallel-15</div><div class="c mono abs" style="left:595px;width:430px">com.creek.gateway.filter.AuthorizeFilter</div><div class="c mono abs" style="left:1025px;width:95px">filter:62</div><div class="c mono abs" style="left:1120px;width:429px">AuthorizeFilter Request path --&gt; /service-…</div></div><div class="row abs" style="top:215px"><div class="c abs" style="left:0;width:47px"><svg width="12" height="12" viewBox="0 0 12 12" fill="currentColor" style="position:absolute;left:5px;top:5.500px;color:#50555f"><g fill="none" stroke="currentColor" stroke-width=".85" stroke-linecap="round" stroke-linejoin="round"><path d="M1.500 10.500l9-9M7 1.200h3.800V5M1.200 7v3.800H5"/></g></svg><i class="cb abs"></i></div><div class="c mono abs" style="left:47px;width:210px">Jun 7, 2023 @ 17:51:58.864</div><div class="c mono abs" style="left:257px;width:127px">cloud-gateway</div><div class="c mono abs" style="left:384px;width:54px">dev</div><div class="c mono abs" style="left:438px;width:55px">INFO</div><div class="c mono abs" style="left:493px;width:102px">parallel-19</div><div class="c mono abs" style="left:595px;width:430px">com.creek.gateway.filter.AuthorizeFilter</div><div class="c mono abs" style="left:1025px;width:95px">filter:62</div><div class="c mono abs" style="left:1120px;width:429px">AuthorizeFilter Request path --&gt; /service-…</div></div><div class="row abs" style="top:242px"><div class="c abs" style="left:0;width:47px"><svg width="12" height="12" viewBox="0 0 12 12" fill="currentColor" style="position:absolute;left:5px;top:5.500px;color:#50555f"><g fill="none" stroke="currentColor" stroke-width=".85" stroke-linecap="round" stroke-linejoin="round"><path d="M1.500 10.500l9-9M7 1.200h3.800V5M1.200 7v3.800H5"/></g></svg><i class="cb abs"></i></div><div class="c mono abs" style="left:47px;width:210px">Jun 7, 2023 @ 17:51:58.864</div><div class="c mono abs" style="left:257px;width:127px">cloud-gateway</div><div class="c mono abs" style="left:384px;width:54px">dev</div><div class="c mono abs" style="left:438px;width:55px">INFO</div><div class="c mono abs" style="left:493px;width:102px">parallel-18</div><div class="c mono abs" style="left:595px;width:430px">com.creek.gateway.filter.AuthorizeFilter</div><div class="c mono abs" style="left:1025px;width:95px">filter:62</div><div class="c mono abs" style="left:1120px;width:429px">AuthorizeFilter Request path --&gt; /service-…</div></div><div class="row abs" style="top:269px"><div class="c abs" style="left:0;width:47px"><svg width="12" height="12" viewBox="0 0 12 12" fill="currentColor" style="position:absolute;left:5px;top:5.500px;color:#50555f"><g fill="none" stroke="currentColor" stroke-width=".85" stroke-linecap="round" stroke-linejoin="round"><path d="M1.500 10.500l9-9M7 1.200h3.800V5M1.200 7v3.800H5"/></g></svg><i class="cb abs"></i></div><div class="c mono abs" style="left:47px;width:210px">Jun 7, 2023 @ 17:51:56.862</div><div class="c mono abs" style="left:257px;width:127px">cloud-gateway</div><div class="c mono abs" style="left:384px;width:54px">dev</div><div class="c mono abs" style="left:438px;width:55px">INFO</div><div class="c mono abs" style="left:493px;width:102px">parallel-6</div><div class="c mono abs" style="left:595px;width:430px">com.creek.gateway.filter.AuthorizeFilter</div><div class="c mono abs" style="left:1025px;width:95px">filter:62</div><div class="c mono abs" style="left:1120px;width:429px">AuthorizeFilter Request path --&gt; /service-…</div></div><div class="row abs" style="top:296px"><div class="c abs" style="left:0;width:47px"><svg width="12" height="12" viewBox="0 0 12 12" fill="currentColor" style="position:absolute;left:5px;top:5.500px;color:#50555f"><g fill="none" stroke="currentColor" stroke-width=".85" stroke-linecap="round" stroke-linejoin="round"><path d="M1.500 10.500l9-9M7 1.200h3.800V5M1.200 7v3.800H5"/></g></svg><i class="cb abs"></i></div><div class="c mono abs" style="left:47px;width:210px">Jun 7, 2023 @ 17:51:56.862</div><div class="c mono abs" style="left:257px;width:127px">cloud-gateway</div><div class="c mono abs" style="left:384px;width:54px">dev</div><div class="c mono abs" style="left:438px;width:55px">INFO</div><div class="c mono abs" style="left:493px;width:102px">parallel-7</div><div class="c mono abs" style="left:595px;width:430px">com.creek.gateway.filter.AuthorizeFilter</div><div class="c mono abs" style="left:1025px;width:95px">filter:62</div><div class="c mono abs" style="left:1120px;width:429px">AuthorizeFilter Request path --&gt; /service-…</div></div><div class="row abs" style="top:323px"><div class="c abs" style="left:0;width:47px"><svg width="12" height="12" viewBox="0 0 12 12" fill="currentColor" style="position:absolute;left:5px;top:5.500px;color:#50555f"><g fill="none" stroke="currentColor" stroke-width=".85" stroke-linecap="round" stroke-linejoin="round"><path d="M1.500 10.500l9-9M7 1.200h3.800V5M1.200 7v3.800H5"/></g></svg><i class="cb abs"></i></div><div class="c mono abs" style="left:47px;width:210px">Jun 7, 2023 @ 17:51:56.862</div><div class="c mono abs" style="left:257px;width:127px">cloud-gateway</div><div class="c mono abs" style="left:384px;width:54px">dev</div><div class="c mono abs" style="left:438px;width:55px">INFO</div><div class="c mono abs" style="left:493px;width:102px">parallel-5</div><div class="c mono abs" style="left:595px;width:430px">com.creek.gateway.filter.AuthorizeFilter</div><div class="c mono abs" style="left:1025px;width:95px">filter:62</div><div class="c mono abs" style="left:1120px;width:429px">AuthorizeFilter Request path --&gt; /service-…</div></div><div class="row abs" style="top:350px"><div class="c abs" style="left:0;width:47px"><svg width="12" height="12" viewBox="0 0 12 12" fill="currentColor" style="position:absolute;left:5px;top:5.500px;color:#50555f"><g fill="none" stroke="currentColor" stroke-width=".85" stroke-linecap="round" stroke-linejoin="round"><path d="M1.500 10.500l9-9M7 1.200h3.800V5M1.200 7v3.800H5"/></g></svg><i class="cb abs"></i></div><div class="c mono abs" style="left:47px;width:210px">Jun 7, 2023 @ 17:51:56.862</div><div class="c mono abs" style="left:257px;width:127px">cloud-gateway</div><div class="c mono abs" style="left:384px;width:54px">dev</div><div class="c mono abs" style="left:438px;width:55px">INFO</div><div class="c mono abs" style="left:493px;width:102px">parallel-8</div><div class="c mono abs" style="left:595px;width:430px">com.creek.gateway.filter.AuthorizeFilter</div><div class="c mono abs" style="left:1025px;width:95px">filter:62</div><div class="c mono abs" style="left:1120px;width:429px">AuthorizeFilter Request path --&gt; /service-…</div></div><div class="row abs" style="top:377px"><div class="c abs" style="left:0;width:47px"><svg width="12" height="12" viewBox="0 0 12 12" fill="currentColor" style="position:absolute;left:5px;top:5.500px;color:#50555f"><g fill="none" stroke="currentColor" stroke-width=".85" stroke-linecap="round" stroke-linejoin="round"><path d="M1.500 10.500l9-9M7 1.200h3.800V5M1.200 7v3.800H5"/></g></svg><i class="cb abs"></i></div><div class="c mono abs" style="left:47px;width:210px">Jun 7, 2023 @ 17:51:56.862</div><div class="c mono abs" style="left:257px;width:127px">cloud-gateway</div><div class="c mono abs" style="left:384px;width:54px">dev</div><div class="c mono abs" style="left:438px;width:55px">INFO</div><div class="c mono abs" style="left:493px;width:102px">parallel-10</div><div class="c mono abs" style="left:595px;width:430px">com.creek.gateway.filter.AuthorizeFilter</div><div class="c mono abs" style="left:1025px;width:95px">filter:62</div><div class="c mono abs" style="left:1120px;width:429px">AuthorizeFilter Request path --&gt; /service-…</div></div><div class="row abs" style="top:404px"><div class="c abs" style="left:0;width:47px"><svg width="12" height="12" viewBox="0 0 12 12" fill="currentColor" style="position:absolute;left:5px;top:5.500px;color:#50555f"><g fill="none" stroke="currentColor" stroke-width=".85" stroke-linecap="round" stroke-linejoin="round"><path d="M1.500 10.500l9-9M7 1.200h3.800V5M1.200 7v3.800H5"/></g></svg><i class="cb abs"></i></div><div class="c mono abs" style="left:47px;width:210px">Jun 7, 2023 @ 17:51:56.862</div><div class="c mono abs" style="left:257px;width:127px">cloud-gateway</div><div class="c mono abs" style="left:384px;width:54px">dev</div><div class="c mono abs" style="left:438px;width:55px">INFO</div><div class="c mono abs" style="left:493px;width:102px">parallel-14</div><div class="c mono abs" style="left:595px;width:430px">com.creek.gateway.filter.AuthorizeFilter</div><div class="c mono abs" style="left:1025px;width:95px">filter:62</div><div class="c mono abs" style="left:1120px;width:429px">AuthorizeFilter Request path --&gt; /service-…</div></div><div class="row abs" style="top:431px"><div class="c abs" style="left:0;width:47px"><svg width="12" height="12" viewBox="0 0 12 12" fill="currentColor" style="position:absolute;left:5px;top:5.500px;color:#50555f"><g fill="none" stroke="currentColor" stroke-width=".85" stroke-linecap="round" stroke-linejoin="round"><path d="M1.500 10.500l9-9M7 1.200h3.800V5M1.200 7v3.800H5"/></g></svg><i class="cb abs"></i></div><div class="c mono abs" style="left:47px;width:210px">Jun 7, 2023 @ 17:51:56.862</div><div class="c mono abs" style="left:257px;width:127px">cloud-gateway</div><div class="c mono abs" style="left:384px;width:54px">dev</div><div class="c mono abs" style="left:438px;width:55px">INFO</div><div class="c mono abs" style="left:493px;width:102px">parallel-17</div><div class="c mono abs" style="left:595px;width:430px">com.creek.gateway.filter.AuthorizeFilter</div><div class="c mono abs" style="left:1025px;width:95px">filter:62</div><div class="c mono abs" style="left:1120px;width:429px">AuthorizeFilter Request path --&gt; /service-…</div></div><div class="row abs" style="top:458px"><div class="c abs" style="left:0;width:47px"><svg width="12" height="12" viewBox="0 0 12 12" fill="currentColor" style="position:absolute;left:5px;top:5.500px;color:#50555f"><g fill="none" stroke="currentColor" stroke-width=".85" stroke-linecap="round" stroke-linejoin="round"><path d="M1.500 10.500l9-9M7 1.200h3.800V5M1.200 7v3.800H5"/></g></svg><i class="cb abs"></i></div><div class="c mono abs" style="left:47px;width:210px">Jun 7, 2023 @ 17:51:56.862</div><div class="c mono abs" style="left:257px;width:127px">cloud-gateway</div><div class="c mono abs" style="left:384px;width:54px">dev</div><div class="c mono abs" style="left:438px;width:55px">INFO</div><div class="c mono abs" style="left:493px;width:102px">parallel-16</div><div class="c mono abs" style="left:595px;width:430px">com.creek.gateway.filter.AuthorizeFilter</div><div class="c mono abs" style="left:1025px;width:95px">filter:62</div><div class="c mono abs" style="left:1120px;width:429px">AuthorizeFilter Request path --&gt; /service-…</div></div></div>
<div id="gthumb" class="abs"></div>
<div class="abs" style="left:1550px;top:729px;width:16px;height:1px;background:#d3dae6"></div><div class="abs" style="left:1550px;top:257px;width:16px;height:1px;background:#d3dae6"></div><div class="abs" style="left:1565px;top:258px;width:1px;height:471px;background:#dfe4ee"></div>
<div id="foot">
<span class="abs" style="left:8px;top:741px">Rows per page: 100</span><svg width="12" height="12" viewBox="0 0 16 16" fill="currentColor" style="position:absolute;left:121px;top:744px;color:#343741"><path d="M13.069 5.157 8.384 9.768a.546.546 0 0 1-.768 0L2.93 5.158a.552.552 0 0 0-.771 0 .53.53 0 0 0 0 .759l4.684 4.61c.641.631 1.672.63 2.312 0l4.684-4.61a.53.53 0 0 0 0-.76.552.552 0 0 0-.771 0Z"/></svg>
<svg width="16" height="16" viewBox="0 0 16 16" fill="currentColor" style="position:absolute;left:1403px;top:742px;color:#a2a7b2"><path d="M10.843 13.069 6.232 8.384a.546.546 0 0 1 0-.768l4.61-4.685a.552.552 0 0 0 0-.771.53.53 0 0 0-.759 0l-4.61 4.684c-.631.641-.63 1.672 0 2.312l4.61 4.684a.53.53 0 0 0 .76 0 .552.552 0 0 0 0-.771Z"/></svg>
<div class="pg abs" style="left:1422.7px;color:#0071c2;font-weight:700;text-decoration:underline">1</div>
<div class="pg abs" style="left:1446.5px;">2</div>
<div class="pg abs" style="left:1470.4px;">3</div>
<div class="pg abs" style="left:1494.2px;">4</div>
<div class="pg abs" style="left:1518.1px;">5</div>
<svg width="16" height="16" viewBox="0 0 16 16" fill="currentColor" style="position:absolute;left:1546px;top:742px;color:#343741"><path d="M5.157 13.069 9.768 8.384a.546.546 0 0 0 0-.768L5.158 2.93a.552.552 0 0 1 0-.771.53.53 0 0 1 .759 0l4.61 4.684c.631.641.63 1.672 0 2.312l-4.61 4.684a.53.53 0 0 1-.76 0 .552.552 0 0 1 0-.771Z"/></svg>
</div>
</div>
</body></html>
